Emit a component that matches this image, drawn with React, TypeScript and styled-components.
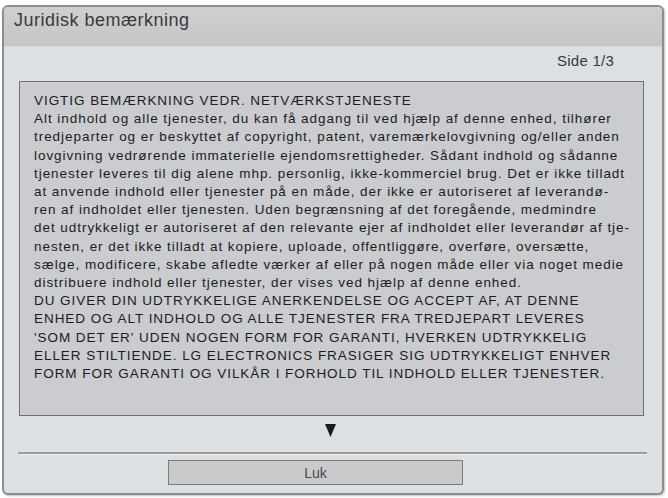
import React from "react";
import styled, { createGlobalStyle } from "styled-components";

const Global = createGlobalStyle`
  html, body { margin: 0; padding: 0; background: #ffffff; }
  body { font-family: "Liberation Sans", Arial, sans-serif; }
`;

const Page = styled.div`
  width: 668px;
  height: 498px;
  box-sizing: border-box;
  padding: 5px 4px 3px 2px;
  background: #ffffff;
`;

const Dialog = styled.div`
  height: 100%;
  box-sizing: border-box;
  border: 2px solid #8e8e8e;
  border-radius: 6px;
  background: #dde0e2;
  display: flex;
  flex-direction: column;
  overflow: hidden;
  box-shadow: 1px 1px 2px rgba(0, 0, 0, 0.25);
`;

const Header = styled.div`
  height: 40px;
  flex: none;
  background: linear-gradient(#cfcfcf, #c6c6c6);
  border-bottom: 1px solid #d6d8d9;
  padding: 3px 0 0 10px;
  box-sizing: border-box;
`;

const Title = styled.div`
  font-size: 18px;
  letter-spacing: 0.5px;
  color: #3a3a3a;
  line-height: 20px;
`;

const Body = styled.div`
  flex: 1;
  display: flex;
  flex-direction: column;
`;

const PageInfo = styled.div`
  display: flex;
  justify-content: flex-end;
  padding: 5px 48px 0 0;
  height: 34px;
  box-sizing: border-box;
  font-size: 15px;
  letter-spacing: 0.25px;
  color: #3a3a3a;
`;

const TextBox = styled.div`
  margin: 0 18px 0 15px;
  height: 335px;
  flex: none;
  box-sizing: border-box;
  border: 1px solid #727272;
  background: #cacccf;
  padding: 10px 0 0 14px;
  color: #1c1c1c;
  font-size: 13.5px;
  letter-spacing: 0.95px;
  line-height: 18.2px;
`;

const Line = styled.div`
  white-space: nowrap;
`;

const ArrowRow = styled.div`
  display: flex;
  justify-content: center;
  padding: 8px 5px 0 0;
  height: 36px;
  flex: none;
  box-sizing: border-box;
`;

const Separator = styled.div`
  margin: 0 15px 0 14px;
  height: 2px;
  flex: none;
  background: #9c9c9c;
  border-bottom: 1px solid #eceeef;
`;

const ButtonRow = styled.div`
  display: flex;
  padding: 5px 0 0 164px;
`;

const CloseButton = styled.div`
  width: 295px;
  height: 25px;
  box-sizing: border-box;
  border: 1px solid #7c7c7c;
  background: #c8cacc;
  color: #4a4a4a;
  font-size: 14px;
  display: flex;
  align-items: center;
  justify-content: center;
`;

const lines = [
  "VIGTIG BEMÆRKNING VEDR. NETVÆRKSTJENESTE",
  "Alt indhold og alle tjenester, du kan få adgang til ved hjælp af denne enhed, tilhører",
  "tredjeparter og er beskyttet af copyright, patent, varemærkelovgivning og/eller anden",
  "lovgivning vedrørende immaterielle ejendomsrettigheder. Sådant indhold og sådanne",
  "tjenester leveres til dig alene mhp. personlig, ikke-kommerciel brug. Det er ikke tilladt",
  "at anvende indhold eller tjenester på en måde, der ikke er autoriseret af leverandø-",
  "ren af indholdet eller tjenesten. Uden begrænsning af det foregående, medmindre",
  "det udtrykkeligt er autoriseret af den relevante ejer af indholdet eller leverandør af tje-",
  "nesten, er det ikke tilladt at kopiere, uploade, offentliggøre, overføre, oversætte,",
  "sælge, modificere, skabe afledte værker af eller på nogen måde eller via noget medie",
  "distribuere indhold eller tjenester, der vises ved hjælp af denne enhed.",
  "DU GIVER DIN UDTRYKKELIGE ANERKENDELSE OG ACCEPT AF, AT DENNE",
  "ENHED OG ALT INDHOLD OG ALLE TJENESTER FRA TREDJEPART LEVERES",
  "'SOM DET ER' UDEN NOGEN FORM FOR GARANTI, HVERKEN UDTRYKKELIG",
  "ELLER STILTIENDE. LG ELECTRONICS FRASIGER SIG UDTRYKKELIGT ENHVER",
  "FORM FOR GARANTI OG VILKÅR I FORHOLD TIL INDHOLD ELLER TJENESTER.",
];

export default function App() {
  return (
    <>
      <Global />
      <Page>
        <Dialog>
          <Header>
            <Title>Juridisk bemærkning</Title>
          </Header>
          <Body>
            <PageInfo>Side 1/3</PageInfo>
            <TextBox>
              {lines.map((l, i) => (
                <Line key={i}>{l}</Line>
              ))}
            </TextBox>
            <ArrowRow>
              <svg width="11" height="13" viewBox="0 0 11 13">
                <polygon points="0,0 11,0 5.5,13" fill="#1a1a1a" />
              </svg>
            </ArrowRow>
            <Separator />
            <ButtonRow>
              <CloseButton>Luk</CloseButton>
            </ButtonRow>
          </Body>
        </Dialog>
      </Page>
    </>
  );
}
